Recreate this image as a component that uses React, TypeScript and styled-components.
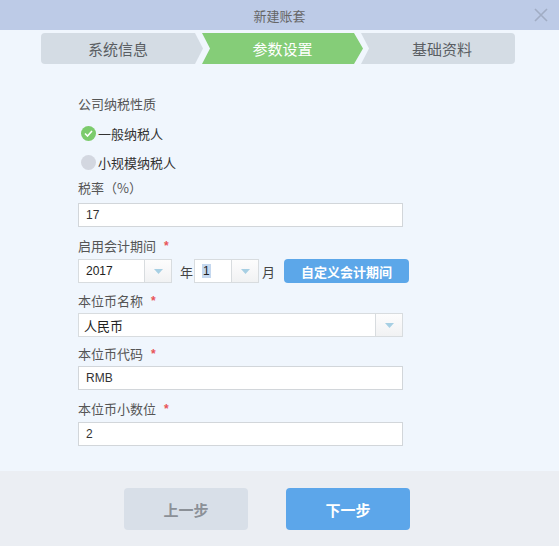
import React from "react";
import styled, { createGlobalStyle } from "styled-components";

const Global = createGlobalStyle`
  html, body { margin: 0; padding: 0; }
  body {
    background: #f0f6fd;
    font-family: "Noto Sans CJK SC", "Liberation Sans", sans-serif;
  }
`;

const Dialog = styled.div`
  width: 559px;
  height: 546px;
  display: flex;
  flex-direction: column;
  background: #f0f6fd;
  overflow: hidden;
`;

const Header = styled.div`
  height: 30px;
  background: #bdcbe7;
  position: relative;
  display: flex;
  align-items: center;
  justify-content: center;
  color: #666;
  font-size: 13px;
`;

const Close = styled.svg`
  position: absolute;
  right: 11px;
  top: 8px;
`;

const Steps = styled.div`
  display: flex;
  margin: 3px 0 0 41px;
  height: 31px;
`;

const Step = styled.div<{ $active?: boolean; $pos: "first" | "mid" | "last"; $w: number }>`
  width: ${(p) => p.$w}px;
  height: 31px;
  margin-left: ${(p) => (p.$pos === "first" ? 0 : p.$pos === "mid" ? -1 : -2)}px;
  display: flex;
  align-items: center;
  justify-content: center;
  padding-left: ${(p) => (p.$pos === "first" ? 0 : 8)}px;
  padding-right: ${(p) => (p.$pos === "last" ? 0 : 8)}px;
  box-sizing: border-box;
  font-size: 15px;
  color: ${(p) => (p.$active ? "#ffffff" : "#5a5e63")};
  background: ${(p) => (p.$active ? "#85cd78" : "#d4dce4")};
  border-radius: ${(p) =>
    p.$pos === "first" ? "4px 0 0 4px" : p.$pos === "last" ? "0 4px 4px 0" : "0"};
  clip-path: ${(p) =>
    p.$pos === "first"
      ? "polygon(0 0, calc(100% - 8px) 0, 100% 50%, calc(100% - 8px) 100%, 0 100%)"
      : p.$pos === "mid"
      ? "polygon(0 0, calc(100% - 9px) 0, 100% 50%, calc(100% - 9px) 100%, 0 100%, 8px 50%)"
      : "polygon(0 0, 100% 0, 100% 100%, 0 100%, 8px 50%)"};
`;

const Form = styled.div`
  display: flex;
  flex-direction: column;
  padding: 31px 0 0 78px;
  flex: 1;
`;

const Label = styled.div<{ $mt: number }>`
  margin-top: ${(p) => p.$mt}px;
  height: 18px;
  line-height: 18px;
  font-size: 13px;
  color: #555;
  display: flex;
  align-items: center;
`;

const Star = styled.span`
  color: #e8545a;
  font-size: 12px;
  margin-left: 8px;
  font-family: "Liberation Sans", sans-serif;
  font-weight: bold;
`;

const Radio = styled.div<{ $mt: number }>`
  margin-top: ${(p) => p.$mt}px;
  height: 18px;
  display: flex;
  align-items: center;
  font-size: 13px;
  color: #333;
  padding-left: 3px;
`;

const Dot = styled.span<{ $on?: boolean }>`
  width: 15px;
  height: 15px;
  border-radius: 50%;
  background: ${(p) => (p.$on ? "#7ccb6c" : "#d3d7e0")};
  display: inline-flex;
  align-items: center;
  justify-content: center;
  margin-right: 2px;
`;

const TextInput = styled.div<{ $mt: number; $w?: number }>`
  margin-top: ${(p) => p.$mt}px;
  width: ${(p) => p.$w ?? 325}px;
  height: 24px;
  box-sizing: border-box;
  border: 1px solid #d2d6da;
  background: #fff;
  display: flex;
  align-items: center;
  padding-left: 7px;
  font-size: 12px;
  color: #333;
  font-family: "Liberation Sans", sans-serif;
`;

const SelectBox = styled.div<{ $w: number }>`
  width: ${(p) => p.$w}px;
  height: 24px;
  box-sizing: border-box;
  border: 1px solid #d8dcdf;
  background: #fff;
  display: flex;
  align-items: stretch;
`;

const SelectValue = styled.div<{ $cjk?: boolean }>`
  flex: 1;
  display: flex;
  align-items: center;
  padding-left: ${(p) => (p.$cjk ? 5 : 7)}px;
  font-size: ${(p) => (p.$cjk ? 13 : 12)}px;
  color: #222;
  font-family: ${(p) =>
    p.$cjk ? '"Noto Sans CJK SC", sans-serif' : '"Liberation Sans", sans-serif'};
`;

const Highlight = styled.span`
  background: #c5d8ef;
  padding: 0 1px;
`;

const ArrowCell = styled.div`
  width: 26px;
  border-left: 1px solid #d8dcdf;
  background: linear-gradient(#fdfdfd, #f1f2f3);
  display: flex;
  align-items: center;
  justify-content: center;
`;

const Row = styled.div<{ $mt: number }>`
  margin-top: ${(p) => p.$mt}px;
  display: flex;
  align-items: center;
  height: 24px;
`;

const Unit = styled.span<{ $ml: number; $mr: number }>`
  margin: 0 ${(p) => p.$mr}px 0 ${(p) => p.$ml}px;
  font-size: 13px;
  color: #444;
`;

const CustomBtn = styled.div`
  width: 125px;
  height: 24px;
  border-radius: 4px;
  background: #5ca7e9;
  color: #fff;
  font-weight: bold;
  font-size: 13px;
  display: flex;
  align-items: center;
  justify-content: center;
`;

const Footer = styled.div`
  height: 75px;
  background: #ebeef3;
  display: flex;
  align-items: flex-start;
  padding: 17px 0 0 124px;
  box-sizing: border-box;
  gap: 38px;
`;

const FootBtn = styled.div<{ $primary?: boolean }>`
  width: 124px;
  height: 42px;
  border-radius: 4px;
  background: ${(p) => (p.$primary ? "#5ca6ea" : "#d8dfe8")};
  color: ${(p) => (p.$primary ? "#fff" : "#8b9097")};
  font-weight: bold;
  font-size: 15px;
  display: flex;
  align-items: center;
  justify-content: center;
`;

const Arrow = () => (
  <svg width="9" height="5" viewBox="0 0 9 5">
    <path d="M0 0 H9 L4.5 5 Z" fill="#a7cfe3" />
  </svg>
);

const Select = ({ w, value, cjk, hl }: { w: number; value: string; cjk?: boolean; hl?: boolean }) => (
  <SelectBox $w={w}>
    <SelectValue $cjk={cjk}>{hl ? <Highlight>{value}</Highlight> : value}</SelectValue>
    <ArrowCell>
      <Arrow />
    </ArrowCell>
  </SelectBox>
);

export default function App() {
  return (
    <Dialog>
      <Global />
      <Header>
        新建账套
        <Close width="14" height="14" viewBox="0 0 14 14">
          <path d="M1 1 L13 13 M13 1 L1 13" stroke="#a1adc4" strokeWidth="1.6" />
        </Close>
      </Header>
      <Steps>
        <Step $pos="first" $w={162}>系统信息</Step>
        <Step $pos="mid" $active $w={161}>参数设置</Step>
        <Step $pos="last" $w={154}>基础资料</Step>
      </Steps>
      <Form>
        <Label $mt={0}>公司纳税性质</Label>
        <Radio $mt={11}>
          <Dot $on>
            <svg width="9" height="7" viewBox="0 0 9 7">
              <path d="M1 3.5 L3.5 6 L8 1" stroke="#fff" strokeWidth="1.6" fill="none" />
            </svg>
          </Dot>
          一般纳税人
        </Radio>
        <Radio $mt={11}>
          <Dot />
          小规模纳税人
        </Radio>
        <Label $mt={8}>税率（%）</Label>
        <TextInput $mt={6}>17</TextInput>
        <Label $mt={10}>
          启用会计期间<Star>*</Star>
        </Label>
        <Row $mt={4}>
          <Select w={94} value="2017" />
          <Unit $ml={8} $mr={1}>年</Unit>
          <Select w={65} value="1" hl />
          <Unit $ml={3} $mr={9}>月</Unit>
          <CustomBtn>自定义会计期间</CustomBtn>
        </Row>
        <Label $mt={9}>
          本位币名称<Star>*</Star>
        </Label>
        <Row $mt={3}>
          <Select w={325} value="人民币" cjk />
        </Row>
        <Label $mt={8}>
          本位币代码<Star>*</Star>
        </Label>
        <TextInput $mt={3}>RMB</TextInput>
        <Label $mt={10}>
          本位币小数位<Star>*</Star>
        </Label>
        <TextInput $mt={4}>2</TextInput>
      </Form>
      <Footer>
        <FootBtn>上一步</FootBtn>
        <FootBtn $primary>下一步</FootBtn>
      </Footer>
    </Dialog>
  );
}
